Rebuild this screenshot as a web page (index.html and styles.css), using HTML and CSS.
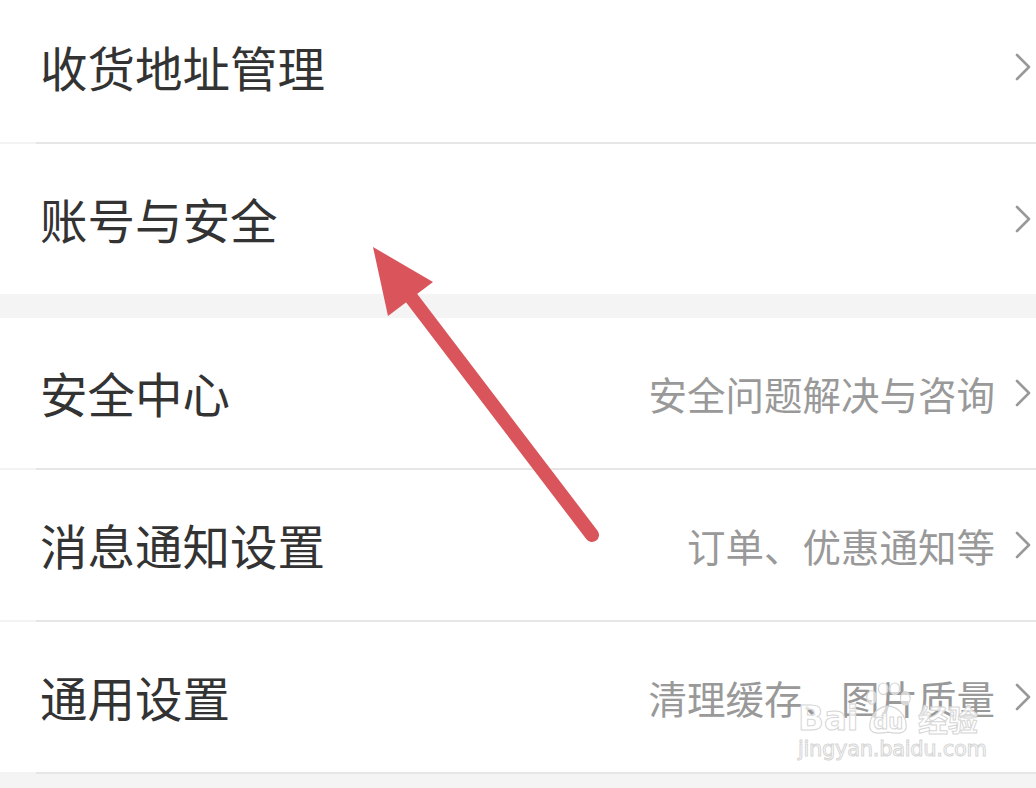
FILE: index.html
```html
<!DOCTYPE html>
<html lang="zh-CN">
<head>
    <meta charset="UTF-8">
    <meta name="viewport" content="width=device-width, initial-scale=1.0">
    <title>设置</title>
    <link rel="stylesheet" href="styles.css">
</head>
<body>
    <div class="page">
        <div class="list">
            <div class="row">
                <span class="label">收货地址管理</span>
                <span class="extra"></span>
                <svg class="chevron" viewBox="0 0 16 28"><polyline points="2,2 14,14 2,26"/></svg>
            </div>
            <div class="divider"></div>
            <div class="row">
                <span class="label">账号与安全</span>
                <span class="extra"></span>
                <svg class="chevron" viewBox="0 0 16 28"><polyline points="2,2 14,14 2,26"/></svg>
            </div>
        </div>

        <div class="gap"></div>

        <div class="list">
            <div class="row">
                <span class="label">安全中心</span>
                <span class="extra">安全问题解决与咨询</span>
                <svg class="chevron" viewBox="0 0 16 28"><polyline points="2,2 14,14 2,26"/></svg>
            </div>
            <div class="divider"></div>
            <div class="row">
                <span class="label">消息通知设置</span>
                <span class="extra">订单、优惠通知等</span>
                <svg class="chevron" viewBox="0 0 16 28"><polyline points="2,2 14,14 2,26"/></svg>
            </div>
            <div class="divider"></div>
            <div class="row">
                <span class="label">通用设置</span>
                <span class="extra">清理缓存、图片质量</span>
                <svg class="chevron" viewBox="0 0 16 28"><polyline points="2,2 14,14 2,26"/></svg>
            </div>
            <div class="divider"></div>
        </div>

        <!-- annotation arrow drawn over the screenshot -->
        <svg class="arrow" width="1036" height="788" viewBox="0 0 1036 788">
            <line x1="410" y1="296" x2="592" y2="535" stroke="#d9555b" stroke-width="14" stroke-linecap="round"/>
            <polygon points="373,247 433,282 388,316" fill="#d9555b"/>
        </svg>

        <div class="watermark">
            <div class="wm-logo">
                <span class="wm-bai">Bai</span>
                <span class="wm-paw">
                    <svg class="paw" viewBox="0 0 54 56">
                        <ellipse cx="10" cy="16" rx="5" ry="7"/>
                        <ellipse cx="22" cy="7" rx="5" ry="6"/>
                        <ellipse cx="34" cy="7" rx="5" ry="6"/>
                        <ellipse cx="45" cy="17" rx="5" ry="7"/>
                        <path d="M8 46 C8 34 18 25 27 25 C36 25 46 34 46 46 C46 54 36 54 27 52 C18 54 8 54 8 46 Z"/>
                    </svg>
                    <span class="wm-du">du</span>
                </span>
                <span class="wm-jy">经验</span>
            </div>
            <div class="wm-url">jingyan.baidu.com</div>
        </div>
    </div>
</body>
</html>
```

FILE: styles.css
```css
html, body {
    margin: 0;
    padding: 0;
}
body {
    font-family: "Noto Sans CJK SC", "Noto Sans", sans-serif;
    background-color: #f4f4f4;
    overflow: hidden;
}
.page {
    position: relative;
    width: 1036px;
    height: 788px;
    overflow: hidden;
}
.list {
    background-color: #fff;
}
.list:first-child {
    margin-top: -8px;
}
.row {
    display: flex;
    align-items: center;
    height: 150px;
    padding: 0 5px 0 40px;
}
.label {
    flex: 1;
    font-size: 47.5px;
    color: #333;
    line-height: 1;
}
.extra {
    font-size: 38.5px;
    color: #999;
    line-height: 1;
    margin-right: 20px;
}
.chevron {
    width: 16px;
    height: 28px;
    fill: none;
    stroke: #999;
    stroke-width: 2.6;
    stroke-linecap: round;
    stroke-linejoin: round;
}
.divider {
    height: 2px;
    background: linear-gradient(to right, #f3f3f3 36px, #e6e6e6 36px);
}
.gap {
    height: 24px;
}
.arrow {
    position: absolute;
    left: 0;
    top: 0;
}
.watermark {
    position: absolute;
    left: 798px;
    top: 680px;
    width: 180px;
    font-family: "DejaVu Sans", "Noto Sans CJK SC", sans-serif;
    color: rgba(255, 255, 255, 0.8);
    -webkit-text-stroke: 1px #d6d6d6;
    white-space: nowrap;
}
.wm-logo {
    display: flex;
    align-items: flex-end;
    justify-content: space-between;
    height: 56px;
    font-weight: bold;
}
.wm-bai {
    font-size: 34px;
    line-height: 36px;
}
.wm-paw {
    position: relative;
    display: inline-block;
    width: 52px;
    height: 54px;
}
.paw {
    position: absolute;
    left: 0;
    top: 0;
    width: 52px;
    height: 54px;
    fill: rgba(255, 255, 255, 0.6);
    stroke: #d6d6d6;
    stroke-width: 1.2;
}
.wm-du {
    position: absolute;
    left: 0;
    right: 0;
    bottom: 3px;
    text-align: center;
    font-size: 21px;
    line-height: 22px;
}
.wm-jy {
    font-family: "Noto Sans CJK SC", sans-serif;
    font-size: 30px;
    line-height: 36px;
}
.wm-url {
    font-size: 21px;
    line-height: 26px;
    letter-spacing: -0.3px;
    text-align: center;
}
```
